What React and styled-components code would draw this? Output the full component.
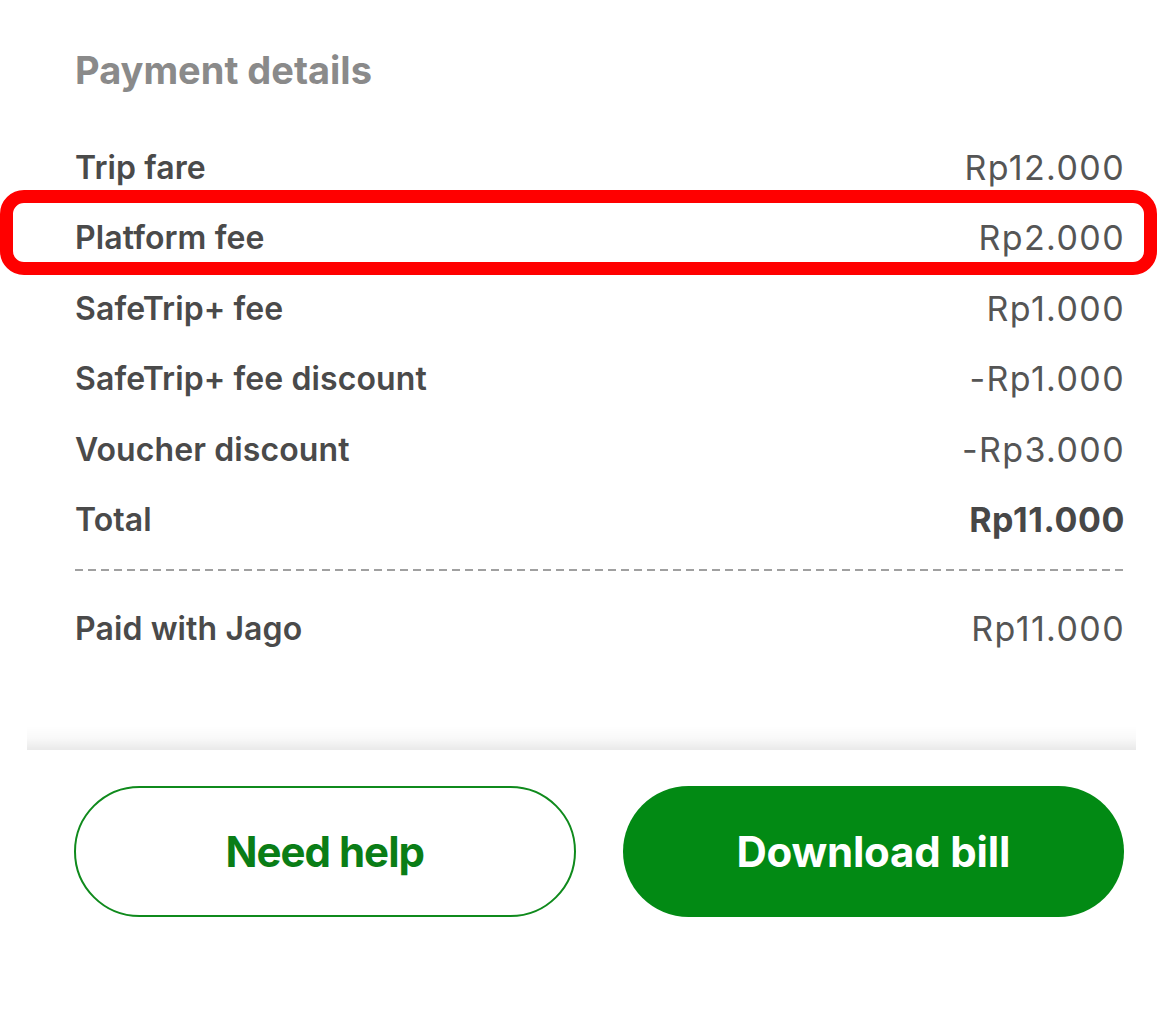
import React from "react";
import styled, { createGlobalStyle } from "styled-components";

const GlobalStyle = createGlobalStyle`
  html, body {
    margin: 0;
    padding: 0;
    background: #fff;
  }
  body {
    font-family: Inter, "Noto Sans", "Liberation Sans", sans-serif;
    -webkit-font-smoothing: antialiased;
  }
`;

const items = [
  { label: "Trip fare", value: "Rp12.000" },
  { label: "Platform fee", value: "Rp2.000", marked: true },
  { label: "SafeTrip+ fee", value: "Rp1.000" },
  { label: "SafeTrip+ fee discount", value: "-Rp1.000" },
  { label: "Voucher discount", value: "-Rp3.000" },
  { label: "Total", value: "Rp11.000", strong: true },
];

const App = () => {
  return (
    <Page>
      <GlobalStyle />
      <Details>
        <Heading>Payment details</Heading>
        <List>
          {items.map((v, i) => (
            <Row key={i}>
              {v.marked && <Marker />}
              <Label $strong={v.strong}>{v.label}</Label>
              <Value $strong={v.strong}>{v.value}</Value>
            </Row>
          ))}
        </List>
        <Divider />
        <Row>
          <Label>Paid with Jago</Label>
          <Value>Rp11.000</Value>
        </Row>
      </Details>
      <Footer>
        <Button $variant="outline">Need help</Button>
        <Button>Download bill</Button>
      </Footer>
    </Page>
  );
};

export default App;

const Page = styled.div`
  width: 1157px;
  height: 1029px;
  display: flex;
  flex-direction: column;
  overflow: hidden;
`;
const Details = styled.div`
  padding: 40px 33px 0 75px;
  display: flex;
  flex-direction: column;
  height: 750px;
  box-sizing: border-box;
`;
const Heading = styled.div`
  height: 60px;
  line-height: 60px;
  font-size: 38px;
  font-weight: 700;
  color: #8a8a8a;
  margin-bottom: 32px;
`;
const List = styled.div`
  display: flex;
  flex-direction: column;
`;
const Row = styled.div`
  position: relative;
  height: 70.5px;
  display: flex;
  align-items: center;
  justify-content: space-between;
`;
const Marker = styled.div`
  position: absolute;
  left: -75px;
  right: -33px;
  top: -13px;
  bottom: -2px;
  border: 13px solid #ff0000;
  border-radius: 24px;
  pointer-events: none;
`;
const Label = styled.span`
  font-size: 32px;
  font-weight: 600;
  color: #4a4a4a;
  letter-spacing: 0.1px;
`;
const Value = styled.span`
  font-size: 34px;
  font-weight: ${(p) => (p.$strong ? 700 : 400)};
  color: ${(p) => (p.$strong ? "#474747" : "#555")};
  letter-spacing: ${(p) => (p.$strong ? "0.6px" : "1.4px")};
  margin-right: -1px;
`;
const Divider = styled.div`
  margin-top: 14px;
  margin-bottom: 23px;
  height: 1.5px;
  background: repeating-linear-gradient(
    to right,
    #a0a0a0 0 8px,
    transparent 8px 13px
  );
`;
const Footer = styled.div`
  position: relative;
  margin: 0 21px 0 27px;
  padding: 36px 12px 0 47px;
  background: #fff;
  display: grid;
  grid-template-columns: 1fr 1fr;
  align-content: start;
  column-gap: 47px;
  flex: 1;
  &::before {
    content: "";
    position: absolute;
    left: 0;
    right: 0;
    top: -24px;
    height: 24px;
    background: linear-gradient(
      to bottom,
      rgba(0, 0, 0, 0) 0%,
      rgba(0, 0, 0, 0.025) 50%,
      rgba(0, 0, 0, 0.085) 100%
    );
  }
`;
const Button = styled.button`
  height: 131px;
  border-radius: 66px;
  font-family: Inter, "Liberation Sans", sans-serif;
  font-size: 42px;
  font-weight: 700;
  letter-spacing: ${(p) => (p.$variant === "outline" ? "-1px" : "-0.2px")};
  cursor: pointer;
  box-sizing: border-box;
  border: ${(p) => (p.$variant === "outline" ? "2.5px solid #0f8a1c" : "none")};
  background: ${(p) => (p.$variant === "outline" ? "#fff" : "#028a14")};
  color: ${(p) => (p.$variant === "outline" ? "#0a7d16" : "#fff")};
`;
